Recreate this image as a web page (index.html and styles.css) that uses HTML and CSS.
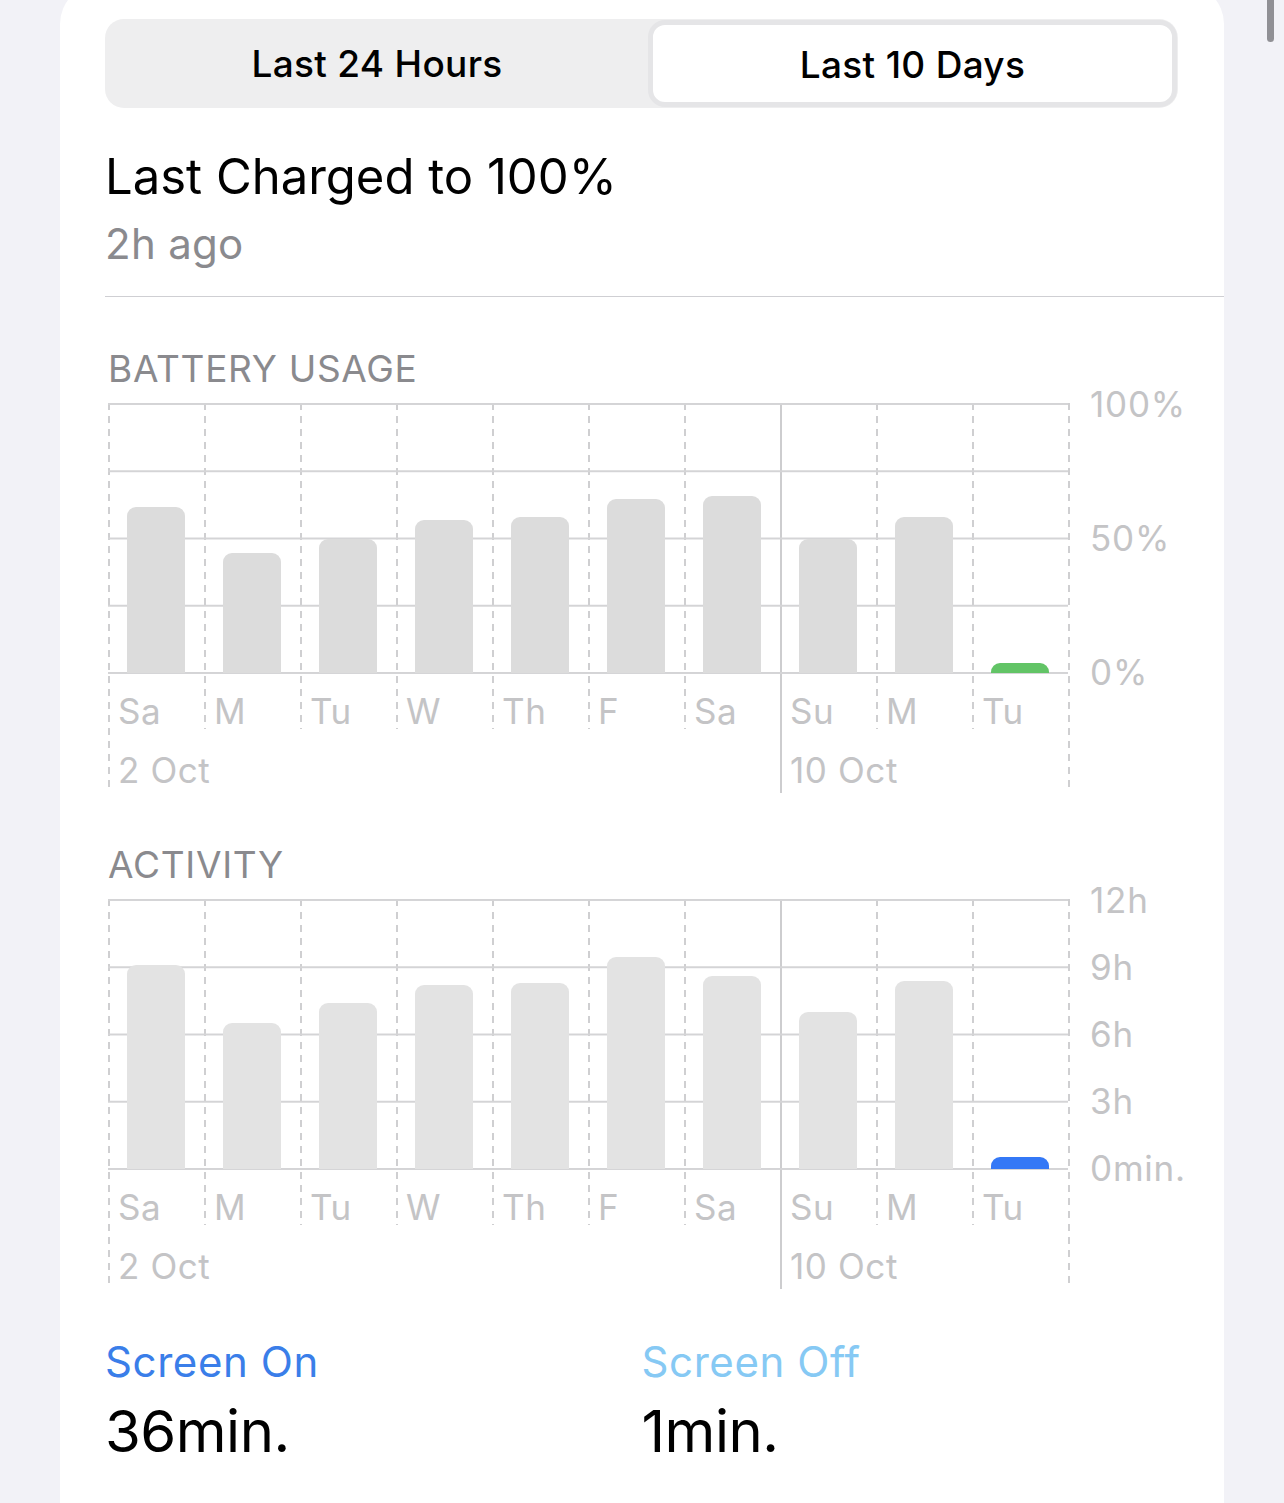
FILE: index.html
```html
<!DOCTYPE html>
<html lang="en">
<head>
<meta charset="utf-8">
<title>Battery</title>
<link rel="stylesheet" href="styles.css">
</head>
<body>
<div class="scrollbar"></div>
<main class="card">
  <div class="segmented">
    <div class="segment">Last 24 Hours</div>
    <div class="segment selected">Last 10 Days</div>
  </div>

  <h1 class="charged">Last Charged to 100%</h1>
  <p class="ago">2h ago</p>
  <div class="divider"></div>

  <section class="chart-section battery">
    <h2 class="chart-title">BATTERY USAGE</h2>
    <div class="chart">
      <div class="col">
        <div class="plot"><div class="bar" style="height:166px"></div></div>
        <div class="day">Sa</div>
        <div class="date">2 Oct</div>
      </div>
      <div class="col">
        <div class="plot"><div class="bar" style="height:120px"></div></div>
        <div class="day">M</div>
      </div>
      <div class="col">
        <div class="plot"><div class="bar" style="height:134px"></div></div>
        <div class="day">Tu</div>
      </div>
      <div class="col">
        <div class="plot"><div class="bar" style="height:153px"></div></div>
        <div class="day">W</div>
      </div>
      <div class="col">
        <div class="plot"><div class="bar" style="height:156px"></div></div>
        <div class="day">Th</div>
      </div>
      <div class="col">
        <div class="plot"><div class="bar" style="height:174px"></div></div>
        <div class="day">F</div>
      </div>
      <div class="col">
        <div class="plot"><div class="bar" style="height:177px"></div></div>
        <div class="day">Sa</div>
      </div>
      <div class="col solid">
        <div class="plot"><div class="bar" style="height:134px"></div></div>
        <div class="day">Su</div>
        <div class="date">10 Oct</div>
      </div>
      <div class="col">
        <div class="plot"><div class="bar" style="height:156px"></div></div>
        <div class="day">M</div>
      </div>
      <div class="col">
        <div class="plot"><div class="bar green" style="height:10px"></div></div>
        <div class="day">Tu</div>
      </div>
      <div class="axis">
        <div class="axis-labels">
          <span>100%</span>
          <span></span>
          <span>50%</span>
          <span></span>
          <span>0%</span>
        </div>
      </div>
    </div>
  </section>

  <section class="chart-section activity">
    <h2 class="chart-title">ACTIVITY</h2>
    <div class="chart">
      <div class="col">
        <div class="plot"><div class="bar" style="height:204px"></div></div>
        <div class="day">Sa</div>
        <div class="date">2 Oct</div>
      </div>
      <div class="col">
        <div class="plot"><div class="bar" style="height:146px"></div></div>
        <div class="day">M</div>
      </div>
      <div class="col">
        <div class="plot"><div class="bar" style="height:166px"></div></div>
        <div class="day">Tu</div>
      </div>
      <div class="col">
        <div class="plot"><div class="bar" style="height:184px"></div></div>
        <div class="day">W</div>
      </div>
      <div class="col">
        <div class="plot"><div class="bar" style="height:186px"></div></div>
        <div class="day">Th</div>
      </div>
      <div class="col">
        <div class="plot"><div class="bar" style="height:212px"></div></div>
        <div class="day">F</div>
      </div>
      <div class="col">
        <div class="plot"><div class="bar" style="height:193px"></div></div>
        <div class="day">Sa</div>
      </div>
      <div class="col solid">
        <div class="plot"><div class="bar" style="height:157px"></div></div>
        <div class="day">Su</div>
        <div class="date">10 Oct</div>
      </div>
      <div class="col">
        <div class="plot"><div class="bar" style="height:188px"></div></div>
        <div class="day">M</div>
      </div>
      <div class="col">
        <div class="plot"><div class="bar blue" style="height:12px"></div></div>
        <div class="day">Tu</div>
      </div>
      <div class="axis">
        <div class="axis-labels">
          <span>12h</span>
          <span>9h</span>
          <span>6h</span>
          <span>3h</span>
          <span>0min.</span>
        </div>
      </div>
    </div>
  </section>

  <div class="screen-stats">
    <div class="stat">
      <div class="stat-label on">Screen On</div>
      <div class="stat-value">36min.</div>
    </div>
    <div class="stat">
      <div class="stat-label off">Screen Off</div>
      <div class="stat-value">1min.</div>
    </div>
  </div>
</main>
</body>
</html>
```

FILE: styles.css
```css
* {
  box-sizing: border-box;
}

html, body {
  margin: 0;
  padding: 0;
}

body {
  background: #f2f2f7;
  font-family: Inter, "Noto Sans", "Liberation Sans", sans-serif;
  color: #000;
  width: 1284px;
  height: 1503px;
  overflow: hidden;
  position: relative;
}

.scrollbar {
  position: absolute;
  left: 1267px;
  top: -10px;
  width: 7px;
  height: 52px;
  border-radius: 4px;
  background: #909095;
}

.card {
  margin: -16px 0 0 60px;
  width: 1164px;
  min-height: 1540px;
  background: #fff;
  border-radius: 40px 40px 0 0;
  padding: 35px 46px 0 45px;
}

/* segmented control */
.segmented {
  display: grid;
  grid-template-columns: 542px 1fr;
  height: 89px;
  padding: 1px;
  border-radius: 19px;
  background: #eeeeef;
}

.segment {
  display: flex;
  align-items: center;
  justify-content: center;
  font-size: 37px;
  font-weight: 500;
  letter-spacing: 0.3px;
}

.segment.selected {
  background: #fff;
  border: 5px solid #e5e5e7;
  border-radius: 17px;
  padding-top: 1px;
}

/* header */
.charged {
  margin: 40px 0 0;
  font-size: 49px;
  line-height: 58px;
  font-weight: 400;
  letter-spacing: 0;
}

.ago {
  margin: 13px 0 0;
  font-size: 42px;
  line-height: 50px;
  color: #8a8a8e;
  letter-spacing: 0.3px;
}

.divider {
  margin: 27px -46px 0 0;
  height: 1px;
  background: #cfcfd3;
}

/* charts */
.chart-section {
  padding-left: 3px;
  margin-top: 49px;
}

.chart-title {
  margin: 0;
  font-size: 37px;
  line-height: 46px;
  font-weight: 400;
  color: #8a8a8e;
  letter-spacing: 0.7px;
}

.chart {
  display: flex;
  align-items: flex-start;
  margin-top: 11px;
}

.col {
  width: 96px;
  flex: none;
  background: repeating-linear-gradient(to bottom, #cfcfd1 0 7px, transparent 7px 13px) 0 0 / 2px 100% no-repeat;
}

.col.solid {
  background: linear-gradient(#cdcdcf, #cdcdcf) 0 0 / 2px 100% no-repeat;
  padding-bottom: 5px;
}

.plot {
  height: 271px;
  display: flex;
  align-items: flex-end;
  padding: 0 0 1px 19px;
  background: linear-gradient(to bottom, #d4d4d6 0 2px, transparent 2px) 0 0 / 100% 67.25px repeat-y;
}

.bar {
  width: 58px;
  border-radius: 9px 9px 0 0;
  background: #dcdcdc;
}

.activity .bar {
  background: #e3e3e3;
}

.activity .bar.blue,
.bar.blue {
  background: #3478f6;
}

.bar.green {
  background: #62c466;
}

.day,
.date {
  padding-left: 10px;
  font-size: 35px;
  line-height: 36px;
  color: #c4c4c6;
  white-space: nowrap;
  letter-spacing: 0.6px;
}

.day {
  padding-top: 19px;
}

.date {
  padding-top: 23px;
}

.axis {
  flex: none;
  height: 385px;
  padding-left: 22px;
  background: repeating-linear-gradient(to bottom, #cfcfd1 0 7px, transparent 7px 13px) 0 0 / 2px 100% no-repeat;
}

.axis-labels {
  height: 271px;
  display: flex;
  flex-direction: column;
  justify-content: space-between;
  padding-bottom: 1px;
}

.axis-labels span {
  height: 2px;
  display: flex;
  align-items: center;
  font-size: 35px;
  color: #c4c4c6;
  white-space: nowrap;
  letter-spacing: 0.8px;
}

/* screen stats */
.screen-stats {
  display: grid;
  grid-template-columns: 1fr 1fr;
  margin-top: 48px;
}

.stat-label {
  font-size: 42px;
  line-height: 50px;
  letter-spacing: 0.6px;
}

.stat-label.on {
  color: #3a7ee9;
}

.stat-label.off {
  color: #86c9f4;
}

.stat-value {
  margin-top: 11px;
  font-size: 58px;
  line-height: 66px;
  letter-spacing: -0.5px;
}
```
